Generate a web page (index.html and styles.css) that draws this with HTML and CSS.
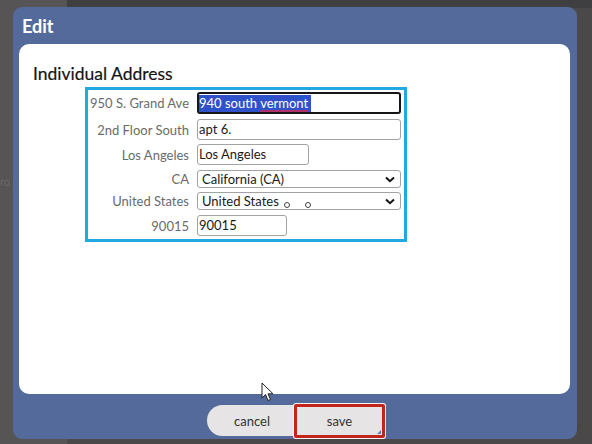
FILE: index.html
```html
<!DOCTYPE html>
<html>
<head>
<meta charset="utf-8">
<link rel="stylesheet" href="styles.css">
</head>
<body>
<div class="backdrop">
  <div class="bg-strip"></div>
  <div class="bg-text">ro</div>
  <div class="dialog">
    <div class="title">Edit</div>
    <div class="content">
      <h2 class="heading">Individual Address</h2>
      <div class="addr-box">
        <div class="row r1">
          <div class="label">950 S. Grand Ave</div>
          <div class="field wide focused"><span class="sel">940 south <span class="typo">vermont</span></span></div>
        </div>
        <div class="row r2">
          <div class="label">2nd Floor South</div>
          <div class="field wide">apt 6.</div>
        </div>
        <div class="row r3">
          <div class="label">Los Angeles</div>
          <div class="field mid">Los Angeles</div>
        </div>
        <div class="row r4">
          <div class="label">CA</div>
          <div class="field wide select"><span class="opt">California (CA)</span><svg class="chev" width="10" height="7" viewBox="0 0 10 7"><path d="M1 1.5 L5 5.2 L9 1.5" fill="none" stroke="#111" stroke-width="2"/></svg></div>
        </div>
        <div class="row r5">
          <div class="label">United States</div>
          <div class="field wide select"><span class="opt">United States</span><span class="dot d1"></span><span class="dot d2"></span><svg class="chev" width="10" height="7" viewBox="0 0 10 7"><path d="M1 1.5 L5 5.2 L9 1.5" fill="none" stroke="#111" stroke-width="2"/></svg></div>
        </div>
        <div class="row r6">
          <div class="label">90015</div>
          <div class="field short">90015</div>
        </div>
      </div>
    </div>
    <div class="footer">
      <button class="btn cancel">cancel</button>
      <button class="btn save">save</button>
    </div>
  </div>
  <svg class="cursor" width="14" height="22" viewBox="0 0 14 22"><path d="M1 1 L1 16 L4.5 12.5 L7 18.5 L9.5 17.5 L7 11.8 L12 11.8 Z" fill="#fff" stroke="#222" stroke-width="1"/></svg>
</div>
</body>
</html>
```

FILE: styles.css
```css
* { box-sizing: border-box; }
html, body { margin: 0; padding: 0; }
body {
  width: 592px;
  height: 444px;
  overflow: hidden;
  background: #4b4949;
  font-family: Lato, "Open Sans", Arial, sans-serif;
}
.backdrop {
  position: relative;
  width: 592px;
  height: 444px;
  padding: 7px 0 0 13px;
  background: linear-gradient(to right, #565454 0, #565454 67px, #4a4848 67px);
}
.bg-strip {
  position: absolute;
  left: 67px;
  top: 0;
  width: 525px;
  height: 8px;
  background: #3f3e40;
}
.bg-text {
  position: absolute;
  left: 0;
  top: 175px;
  font-size: 11px;
  color: #6a6868;
}
.dialog {
  position: relative;
  width: 564px;
  height: 432px;
  background: #536a9b;
  border-radius: 9px;
  display: flex;
  flex-direction: column;
}
.title {
  height: 37px;
  padding: 8px 0 0 9px;
  color: #fff;
  font-weight: bold;
  font-size: 18px;
  line-height: 22px;
}
.content {
  margin: 0 7px 0 6px;
  height: 350px;
  background: #fff;
  border-radius: 10px;
  padding: 19px 0 0 14px;
}
.heading {
  margin: 0;
  font-size: 17.5px;
  font-weight: normal;
  color: #141414;
  line-height: 22px;
  -webkit-text-stroke: 0.2px #141414;
}
.addr-box {
  margin: 2px 0 0 52px;
  width: 322px;
  height: 155px;
  border: 3px solid #22a9e0;
  padding: 2px 3px 3px 0;
  display: flex;
  flex-direction: column;
  gap: 4.6px;
}
.row {
  display: flex;
  align-items: center;
  gap: 8px;
}
.label {
  width: 101px;
  text-align: right;
  color: #6b6b6b;
  font-size: 13px;
  line-height: 16px;
  white-space: nowrap;
  align-self: flex-start;
  padding-top: 3px;
}
.field {
  position: relative;
  height: 21px;
  border: 1px solid #a3a3a3;
  border-radius: 3px;
  font-size: 13px;
  color: #1a1a1a;
  line-height: 19px;
  padding-left: 1px;
  white-space: nowrap;
  display: flex;
  align-items: center;
}
.wide { width: 204px; }
.mid { width: 112px; }
.short { width: 90px; }
.focused {
  height: 22px;
  border: 2px solid #161616;
  border-radius: 3px;
  padding-left: 0;
}
.sel {
  background: #2f51c9;
  color: #fff;
  line-height: 17px;
  padding-right: 3px;
}
.typo {
  text-decoration: underline;
  text-decoration-color: #b0306a;
  text-decoration-thickness: 1.5px;
  text-underline-offset: 2px;
}
.select {
  height: 18px;
  padding-left: 4px;
  line-height: 16px;
}
.r4 .label, .r5 .label { padding-top: 1px; }
.opt { flex: 1; }
.chev {
  position: absolute;
  right: 5px;
  top: 5px;
}
.dot {
  position: absolute;
  top: 9px;
  width: 6px;
  height: 6px;
  border: 1px solid #444;
  border-radius: 50%;
  background: #fff;
}
.d1 { left: 86px; }
.d2 { left: 107px; }
.footer {
  flex: 1;
  display: flex;
  justify-content: center;
  align-items: flex-start;
  padding-top: 11px;
  padding-left: 2px;
}
.btn {
  font-family: Lato, "Open Sans", Arial, sans-serif;
  font-size: 13px;
  color: #333;
  background: #e6e4e4;
  border: none;
  padding: 0;
  cursor: pointer;
}
.cancel {
  width: 90px;
  height: 31px;
  border-radius: 16px 0 0 16px;
}
.save {
  position: relative;
  width: 91px;
  height: 34px;
  margin-left: -3px;
  margin-top: -1px;
  border: 3px solid #c2261a;
  box-shadow: 0 0 0 1px #f4f4f4;
  border-radius: 2px;
}
.save::after {
  content: "";
  position: absolute;
  right: 1px;
  bottom: 1px;
  border-left: 4px solid transparent;
  border-bottom: 4px solid #6a7fb0;
}
.cursor {
  position: absolute;
  left: 261px;
  top: 382px;
}
```
